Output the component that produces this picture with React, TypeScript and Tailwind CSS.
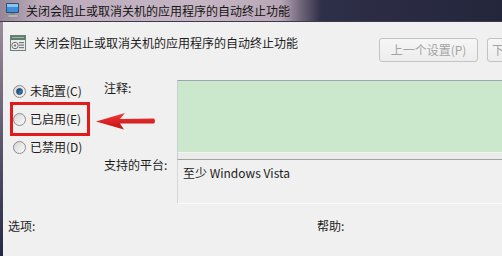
import React from "react";

const font = { fontFamily: '"Noto Sans CJK SC", "Noto Sans", sans-serif' };

function Radio({ checked }: { checked?: boolean }) {
  return (
    <span className="w-[13px] h-[13px] rounded-full border border-[#8c8c8c] bg-gradient-to-br from-[#d6d6d6] to-[#fbfbfb] flex items-center justify-center shrink-0">
      {checked && (
        <span className="w-[7px] h-[7px] rounded-full bg-gradient-to-br from-[#15406f] to-[#4f8fc6] border border-[#1d3f66]" />
      )}
    </span>
  );
}

function TitleIcon() {
  return (
    <svg width="16" height="16" viewBox="0 0 16 16">
      <rect x="1" y="1" width="13" height="10" rx="1" fill="#2d4f7c" />
      <rect x="2" y="2" width="11" height="8" fill="#3f8fd8" />
      <rect x="2" y="2" width="11" height="3" fill="#8cc4f0" />
      <rect x="5" y="11" width="5" height="2" fill="#8a8a8a" />
      <rect x="3" y="13" width="10" height="2" rx="0.5" fill="#c9c9c9" stroke="#7a7a7a" strokeWidth="0.5" />
    </svg>
  );
}

function PolicyIcon() {
  return (
    <svg width="16" height="16" viewBox="0 0 16 16">
      <rect x="0.5" y="0.5" width="15" height="15" fill="#e8ece8" stroke="#6f7f78" />
      <rect x="1" y="1" width="14" height="4" fill="#5f7d6d" />
      <rect x="2" y="2" width="12" height="1" fill="#9fb8aa" />
      <circle cx="5" cy="10.5" r="3.2" fill="#f5f5f5" stroke="#6a6a6a" strokeWidth="1" />
      <circle cx="5" cy="10.5" r="1.2" fill="#7a7a7a" />
      <rect x="9" y="7" width="5" height="1.2" fill="#6d7b84" />
      <rect x="9" y="9.5" width="5" height="1.2" fill="#6d7b84" />
      <rect x="9" y="12" width="5" height="1.2" fill="#6d7b84" />
    </svg>
  );
}

export default function App() {
  return (
    <div className="w-[502px] h-[256px] overflow-hidden relative bg-[#f0f0f0] text-[12px] leading-[16px] text-[#1c1c1c]" style={font}>
      {/* Title bar */}
      <div className="h-[21px] flex items-center bg-[linear-gradient(90deg,#968696_0%,#bcacbc_8%,#c6b6c4_40%,#b8a6b6_56%,#6e6478_60%,#2e2f48_64%,#24263c_100%)]">
        <div className="ml-[5px] mt-[-2px]">
          <TitleIcon />
        </div>
        <span className="ml-[5px] text-[12px] text-[#151515] whitespace-nowrap">关闭会阻止或取消关机的应用程序的自动终止功能</span>
      </div>
      <div className="h-px bg-[#3a3a4c]" />
      <div className="flex h-[234px]">
        <div className="w-[3px] bg-gradient-to-b from-[#9c8c9a] to-[#262845]" />
        <div className="flex-1 flex flex-col min-w-0">
          {/* Header */}
          <div className="h-[52px] flex items-start">
            <div className="ml-[7px] mt-[13px] shrink-0">
              <PolicyIcon />
            </div>
            <div className="ml-[8px] mt-[13px] w-[345px] shrink-0 whitespace-nowrap">关闭会阻止或取消关机的应用程序的自动终止功能</div>
            <button className="mt-[16px] w-[99px] h-[24px] shrink-0 rounded-[3px] border border-[#c3c3c3] bg-gradient-to-b from-[#f6f6f6] to-[#ededed] text-[#a4a4a4] text-[12px]">
              上一个设置(P)
            </button>
            <button className="ml-[9px] mt-[16px] w-[99px] h-[24px] shrink-0 rounded-[3px] border border-[#c3c3c3] bg-gradient-to-b from-[#f6f6f6] to-[#ededed] text-[#a4a4a4] text-[12px] text-left pl-[4px]">
              下一个设置(N)
            </button>
          </div>
          {/* Main */}
          <div className="h-[130px] flex">
            <div className="w-[101px] shrink-0 pt-[3px] relative">
              <div className="h-[28px] flex items-center pl-[10px]">
                <Radio checked />
                <span className="ml-[4px]">未配置(C)</span>
              </div>
              <div className="h-[28px] flex items-center pl-[10px]">
                <Radio />
                <span className="ml-[4px]">已启用(E)</span>
              </div>
              <div className="h-[28px] flex items-center pl-[10px]">
                <Radio />
                <span className="ml-[4px]">已禁用(D)</span>
              </div>
              <div className="absolute left-[7px] top-[28px] w-[80px] h-[34px] border-[3px] border-[#e3191c]" />
            </div>
            <div className="w-[73px] shrink-0 pt-[6px]">
              <div>注释:</div>
              <div className="mt-[61px] whitespace-nowrap">支持的平台:</div>
            </div>
            <div className="flex-1 pt-[6px] min-w-0">
              <div className="h-[79px] border-t border-t-[#9aa6b2] border-l border-l-[#c8d0d6] flex flex-col">
                <div className="h-[71px] bg-[#cce8cc]" />
                <div className="h-px bg-[#f2f6f2]" />
                <div className="flex-1 bg-[#e9ece9]" />
              </div>
              <div className="h-[45px] border-t border-t-[#a2a2a2] border-l border-l-[#d6d6d6] border-b border-b-[#fbfbfb] pl-[5px] pt-[5px] whitespace-nowrap">
                至少 Windows Vista
              </div>
            </div>
          </div>
          {/* Bottom */}
          <div className="flex pt-[14px] pl-[5px]">
            <span className="w-[309px] shrink-0">选项:</span>
            <span>帮助:</span>
          </div>
        </div>
      </div>
      {/* Annotation arrow */}
      <svg className="absolute left-[94px] top-[109px]" width="64" height="24" viewBox="0 0 64 24">
        <defs>
          <linearGradient id="ag" x1="0" y1="0" x2="0" y2="1">
            <stop offset="0" stopColor="#f23a3a" />
            <stop offset="1" stopColor="#c21010" />
          </linearGradient>
        </defs>
        <path d="M2 12.5 L31 4 L26 10 L60 9.5 Q62 12 60 14.5 L26 14.5 L30 20.5 Z" fill="url(#ag)" />
      </svg>
    </div>
  );
}
